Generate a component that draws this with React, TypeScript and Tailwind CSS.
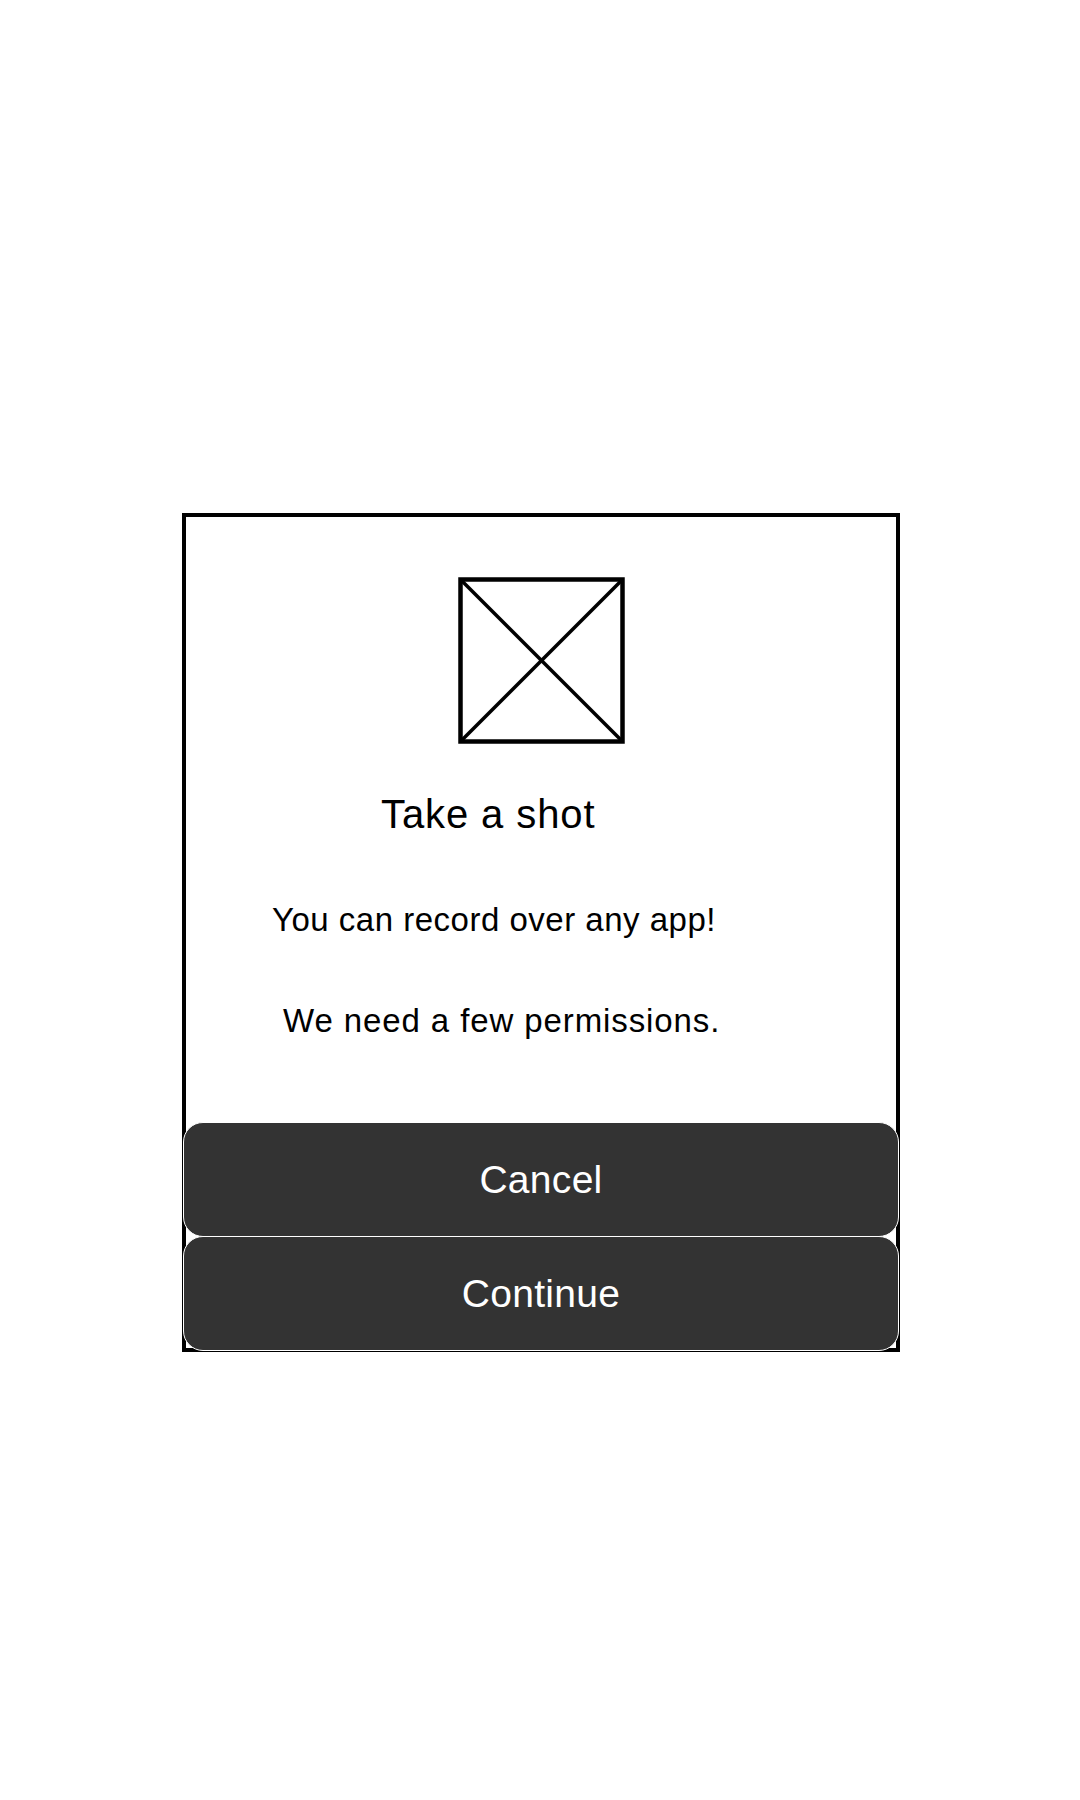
export default function App() {
  return (
    <div className="w-[1080px] h-[1800px] bg-white pt-[513px] pl-[182px] font-['Liberation_Sans',Arial,sans-serif] text-black">
      <div className="w-[718px] border-[4.5px] border-black flex flex-col">
        <div className="mt-[60px] flex justify-center">
          <svg width="167" height="167" viewBox="0 0 167 167" aria-label="Image placeholder">
            <rect x="2.5" y="2.5" width="162" height="162" fill="none" stroke="#000" strokeWidth="4.5" />
            <line x1="3" y1="3" x2="164" y2="164" stroke="#000" strokeWidth="3.5" />
            <line x1="164" y1="3" x2="3" y2="164" stroke="#000" strokeWidth="3.5" />
          </svg>
        </div>
        <h1 className="mt-[50px] pl-[195px] text-[40px] leading-none font-normal tracking-[0.9px]">Take a shot</h1>
        <p className="mt-[69px] pl-[86px] text-[33px] leading-none tracking-[0.5px]">You can record over any app!</p>
        <p className="mt-[68px] pl-[97px] text-[33px] leading-none tracking-[0.9px]">We need a few permissions.</p>
        <div className="mt-[85px] -mx-[3px] -mb-[3px] flex flex-col">
          <button className="h-[115px] rounded-[20px] border border-white bg-[#333333] text-white text-[39px] leading-none tracking-[0.3px]">
            Cancel
          </button>
          <button className="h-[115px] -mt-px rounded-[20px] border border-white bg-[#333333] text-white text-[39px] leading-none tracking-[0.3px]">
            Continue
          </button>
        </div>
      </div>
    </div>
  );
}
